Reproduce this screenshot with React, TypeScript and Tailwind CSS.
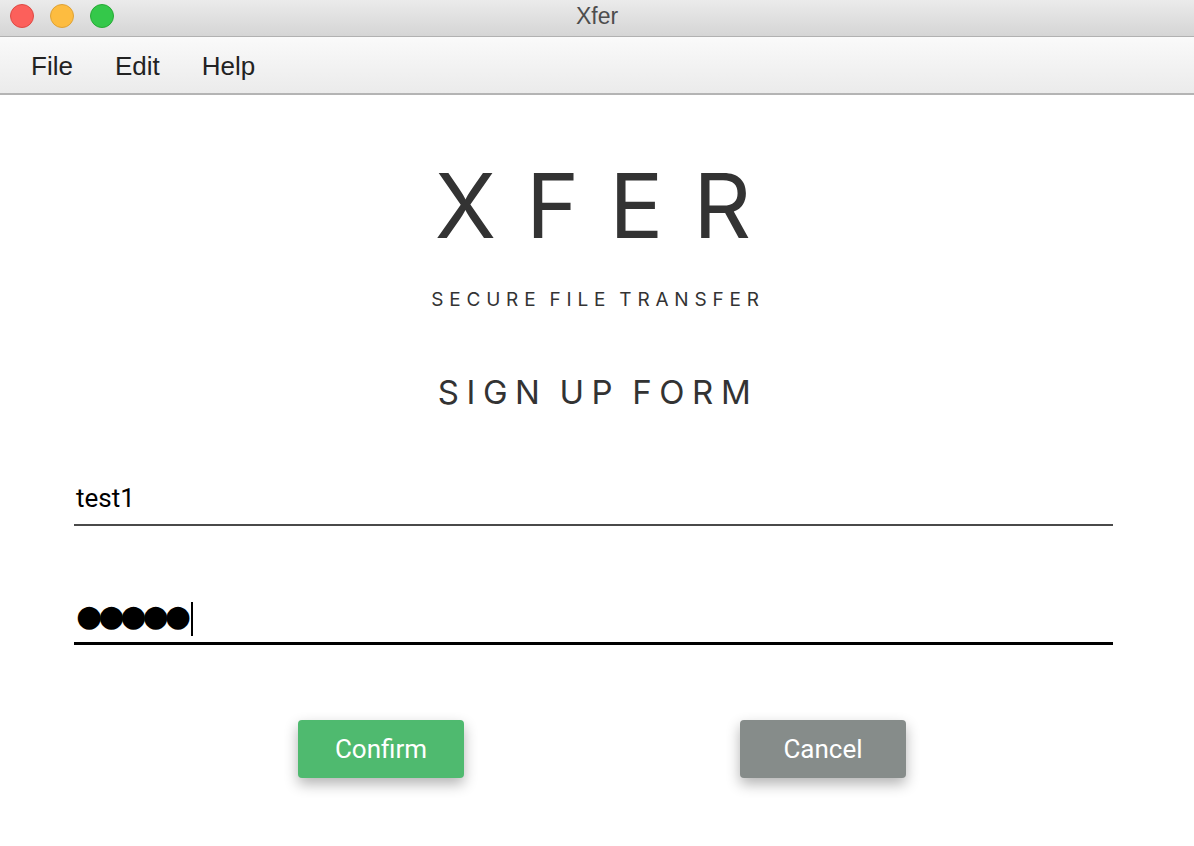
export default function App() {
  return (
    <div className="w-[1194px] h-[846px] bg-white flex flex-col overflow-hidden font-['Liberation_Sans',sans-serif]">
      {/* Title bar */}
      <div className="relative h-[37px] shrink-0 bg-gradient-to-b from-[#ebebeb] to-[#d5d5d5] border-b border-[#b1b1b1] flex items-center justify-center">
        <div className="absolute left-[10px] top-[4px] flex gap-[16px]">
          <span className="w-[24px] h-[24px] rounded-full bg-[#fc605b] border border-[#de4a44]" />
          <span className="w-[24px] h-[24px] rounded-full bg-[#fdbc40] border border-[#dea236]" />
          <span className="w-[24px] h-[24px] rounded-full bg-[#34c84a] border border-[#27aa35]" />
        </div>
        <span className="text-[23px] text-[#4d4d4d] leading-none -mt-[3px]">Xfer</span>
      </div>

      {/* Menu bar */}
      <div className="h-[58px] shrink-0 bg-gradient-to-b from-[#fafafa] to-[#ebebeb] border-b-2 border-[#b4b4b4] flex items-center pt-[3px] pl-[31px] gap-[42px] text-[26px] text-[#222]">
        <span>File</span>
        <span>Edit</span>
        <span>Help</span>
      </div>

      {/* Content */}
      <div className="flex flex-col items-center font-['Inter',sans-serif] text-[#333]">
        <h1 className="mt-[66px] text-[90px] font-normal leading-none tracking-[30px] pl-[22px]">XFER</h1>
        <p className="mt-[39px] text-[19px] tracking-[5.8px] [word-spacing:-3px] pl-[2px] leading-none">SECURE FILE TRANSFER</p>
        <h2 className="mt-[67px] text-[33px] tracking-[7.6px] [word-spacing:-5px] pl-[2px] leading-none">SIGN UP FORM</h2>

        <div className="self-stretch ml-[74px] mr-[81px] mt-[63px] flex flex-col">
          <div className="h-[54px] border-b-2 border-[#4a4a4a] flex items-end pb-[13px] pl-[2px] text-[26px] text-black font-['Roboto',sans-serif] leading-none">
            test1
          </div>
          <div className="mt-[61px] h-[58px] border-b-[3px] border-black flex items-end pb-[11px] pl-[2px]">
            <span className="text-[30px] leading-none text-black tracking-[-4px] font-['DejaVu_Sans',sans-serif]">●●●●●</span>
            <span className="w-[2px] h-[34px] bg-black ml-[4px] -mb-[5px]" />
          </div>
        </div>

        <div className="mt-[75px] ml-[10px] flex gap-[276px] font-['Roboto',sans-serif]">
          <button className="w-[166px] h-[58px] rounded-[4px] bg-[#4fba6f] text-white text-[26px] shadow-[0_6px_14px_rgba(0,0,0,0.3)]">
            Confirm
          </button>
          <button className="w-[166px] h-[58px] rounded-[4px] bg-[#868c8a] text-white text-[26px] shadow-[0_6px_14px_rgba(0,0,0,0.3)]">
            Cancel
          </button>
        </div>
      </div>
    </div>
  );
}
